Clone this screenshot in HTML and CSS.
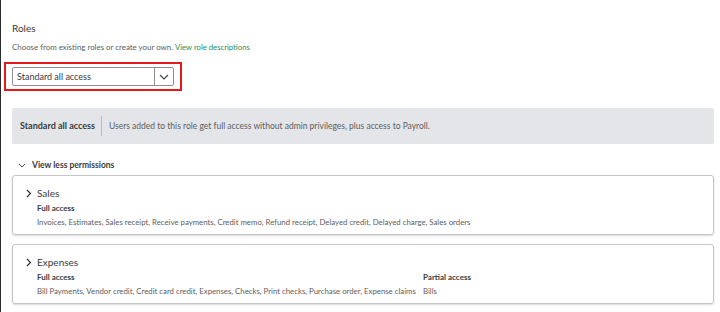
FILE: index.html
```html
<!DOCTYPE html>
<html lang="en">
<head>
  <meta charset="UTF-8">
  <meta name="viewport" content="width=device-width, initial-scale=1.0">
  <title>Roles</title>
  <link rel="stylesheet" href="styles.css">
</head>
<body>
  <div class="page">
    <h2 class="title">Roles</h2>
    <p class="hint">Choose from existing roles or create your own. <a href="#">View role descriptions</a></p>

    <div class="highlight">
      <div class="select">
        <span class="select-value">Standard all access</span>
        <span class="select-btn">
          <svg width="10" height="6" viewBox="0 0 10 6"><path d="M1 1l4 4 4-4" fill="none" stroke="#444" stroke-width="1.2"/></svg>
        </span>
      </div>
    </div>

    <div class="banner">
      <strong>Standard all access</strong>
      <span class="banner-text">Users added to this role get full access without admin privileges, plus access to Payroll.</span>
    </div>

    <div class="toggle">
      <svg width="8" height="5" viewBox="0 0 8 5"><path d="M1 1l3 3 3-3" fill="none" stroke="#444" stroke-width="1"/></svg>
      <span>View less permissions</span>
    </div>

    <div class="card">
      <div class="card-head">
        <svg width="6" height="9" viewBox="0 0 6 9"><path d="M1 1l3.5 3.5L1 8" fill="none" stroke="#333" stroke-width="1.2"/></svg>
        <span>Sales</span>
      </div>
      <div class="card-body">
        <div class="group">
          <div class="label">Full access</div>
          <div class="items">Invoices, Estimates, Sales receipt, Receive payments, Credit memo, Refund receipt, Delayed credit, Delayed charge, Sales orders</div>
        </div>
      </div>
    </div>

    <div class="card">
      <div class="card-head">
        <svg width="6" height="9" viewBox="0 0 6 9"><path d="M1 1l3.5 3.5L1 8" fill="none" stroke="#333" stroke-width="1.2"/></svg>
        <span>Expenses</span>
      </div>
      <div class="card-body">
        <div class="group wide">
          <div class="label">Full access</div>
          <div class="items">Bill Payments, Vendor credit, Credit card credit, Expenses, Checks, Print checks, Purchase order, Expense claims</div>
        </div>
        <div class="group">
          <div class="label">Partial access</div>
          <div class="items">Bills</div>
        </div>
      </div>
    </div>
  </div>
</body>
</html>
```

FILE: styles.css
```css
body {
  margin: 0;
  font-family: Lato, "Open Sans", sans-serif;
  color: #393a3d;
  background: #fff;
}
.page {
  border-left: 1px solid #2b2b2b;
  min-height: 312px;
  box-sizing: border-box;
  padding: 22px 6px 0 11px;
}
.title {
  margin: 0;
  font-size: 10px;
  font-weight: 400;
  line-height: 12px;
}
.hint {
  margin: 8px 0 0;
  font-size: 7.9px;
  line-height: 10px;
  color: #5c5d60;
}
.hint a {
  color: #2d8a54;
  text-decoration: none;
  font-size: 7.7px;
}
.highlight {
  margin: 10px 0 0 -8px;
  width: 178px;
  box-sizing: border-box;
  border: 2px solid #e21a1a;
  padding: 3px 6px 3px 6px;
}
.select {
  display: flex;
  height: 19px;
  box-sizing: border-box;
  border: 1px solid #8d9096;
  border-radius: 2px;
  font-size: 9px;
}
.select-value {
  flex: 1;
  padding-left: 4px;
  line-height: 17px;
}
.select-btn {
  width: 18px;
  border-left: 1px solid #8d9096;
  display: flex;
  align-items: center;
  justify-content: center;
}
.banner {
  margin-top: 17px;
  height: 36px;
  background: #e4e5e8;
  border-radius: 2px;
  display: flex;
  align-items: center;
  padding-left: 8px;
}
.banner strong {
  font-size: 9px;
  padding-right: 6px;
  border-right: 1px solid #b9bbbf;
  line-height: 20px;
}
.banner-text {
  padding-left: 7px;
  font-size: 8.5px;
  color: #5c5d60;
}
.toggle {
  margin-top: 15px;
  display: flex;
  align-items: center;
  gap: 6px;
  padding-left: 6px;
  font-size: 8.5px;
  font-weight: 700;
  height: 12px;
}
.card {
  margin-top: 4px;
  border: 1px solid #c4c5c8;
  border-radius: 3px;
  box-shadow: 0 1px 2px rgba(0,0,0,0.15);
  padding: 10px 0 8px 13px;
  height: 60px;
  box-sizing: border-box;
}
.card + .card {
  margin-top: 9px;
}
.card-head {
  display: flex;
  align-items: center;
  gap: 5px;
  font-size: 10px;
  height: 14px;
}
.card-body {
  display: flex;
  padding-left: 11px;
  margin-top: 2px;
}
.group.wide {
  width: 386px;
}
.label {
  font-size: 8px;
  font-weight: 700;
  line-height: 12px;
}
.items {
  margin-top: 2px;
  font-size: 7.8px;
  line-height: 12px;
  color: #5c5d60;
  white-space: nowrap;
}
```
